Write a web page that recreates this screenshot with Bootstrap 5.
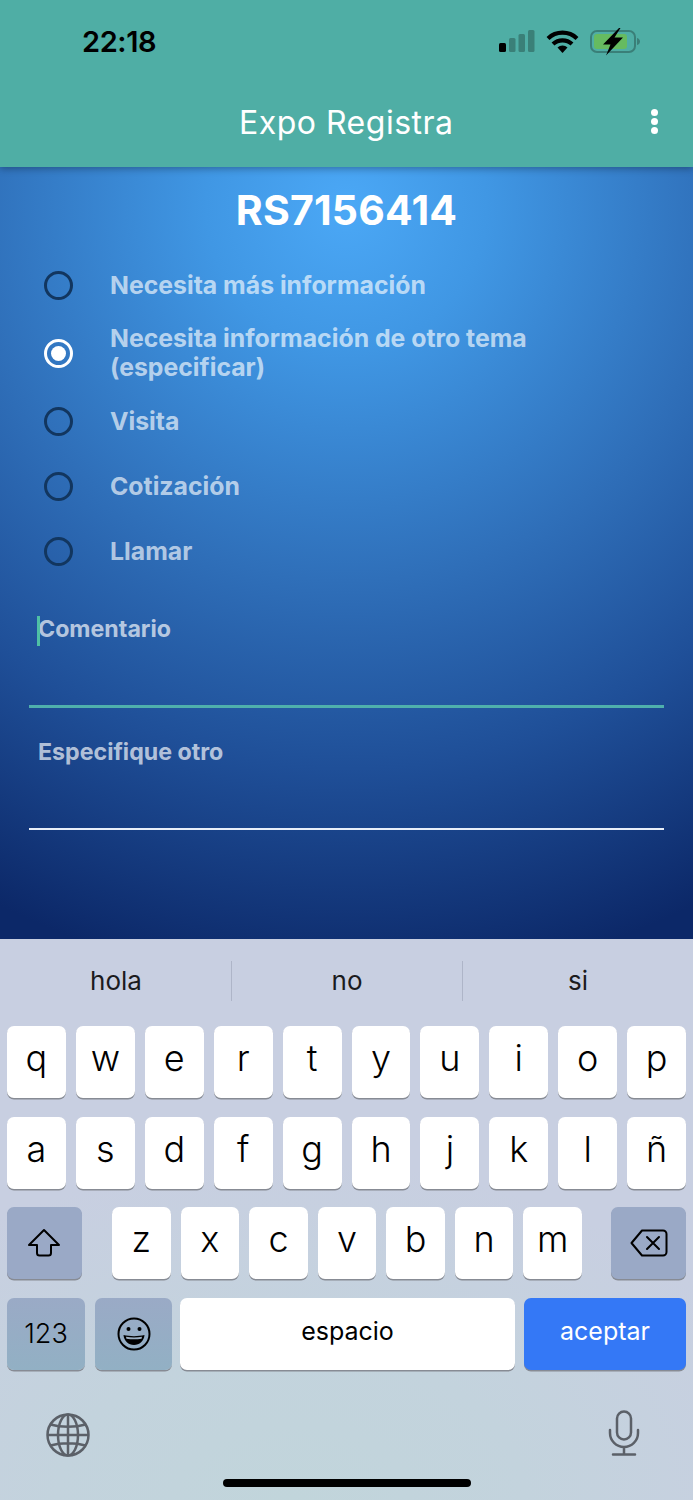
<!DOCTYPE html>
<html lang="en">
<head>
  <meta charset="UTF-8">
  <meta name="viewport" content="width=device-width, initial-scale=1">
  <link href="https://cdn.jsdelivr.net/npm/bootstrap@5.3.0/dist/css/bootstrap.min.css" rel="stylesheet">
  <title>Expo Registra</title>
  <style>
    body {
      width: 693px;
      height: 1500px;
      overflow: hidden;
      font-family: Inter, "Liberation Sans", sans-serif;
      background-color: #0c2868;
    }
    .app-head {
      height: 167px;
      background-color: #4faea5;
      box-shadow: 0 2px 7px rgba(0, 0, 0, .3);
      position: relative;
      z-index: 2;
    }
    .status-row { height: 83px; padding: 28px 48px 0 82px; }
    .status-time { font-size: 29px; font-weight: 600; color: #000; line-height: 28px; letter-spacing: -.4px; }
    .status-icons { margin-top: -1px; }
    .title-row { height: 84px; padding: 0 35px 5px 0; }
    .app-title { font-size: 32px; font-weight: 400; color: #fff; margin-left: 239px; letter-spacing: .5px; }
    .dots { width: 7px; display: flex; flex-direction: column; gap: 2px; margin-bottom: 2px; }
    .dots span { width: 7px; height: 7px; border-radius: 50%; background: #fff; }
    .form-pane {
      height: 772px;
      padding: 0 29px;
      background: radial-gradient(ellipse 780px 780px at 50% 40px, #4ba8f6 0%, #4097e4 18%, #2f6fb9 48%, #1f4f98 72%, #0c2868 100%);
    }
    .code-title { font-size: 41px; font-weight: 700; color: #fff; text-align: center; line-height: 46px; padding-top: 20px; height: 88px; letter-spacing: .2px; }
    .opt-row { padding-left: 15px; color: rgba(255, 255, 255, .65); font-size: 24.8px; font-weight: 650; line-height: 29px; }
    .opt-text { margin-left: 37px; }
    .radio-dot { flex: 0 0 29px; width: 29px; height: 29px; border-radius: 50%; border: 3px solid #12365f; }
    .radio-dot.on { border-color: #fff; position: relative; }
    .radio-dot.on::after { content: ""; position: absolute; inset: 4px; border-radius: 50%; background: #fff; }
    .field-label { color: rgba(255, 255, 255, .68); font-size: 23.2px; font-weight: 650; line-height: 30px; padding-left: 9px; position: relative; }
    .caret-bar { position: absolute; left: 8px; top: 2px; width: 3px; height: 30px; background: #4fc0a5; }
    .field-first { margin-top: 33px; margin-bottom: 61px; }
    .field-second { margin-top: 29px; margin-bottom: 61px; }
    .field-line { height: 3px; background: #4fb0ac; }
    .field-line.plain { height: 2px; background: #e8eef8; }
    .kb {
      height: 561px;
      background: radial-gradient(ellipse 520px 340px at 42% 100%, #c1d5db 0%, #c3d3dd 45%, #c8cfe1 100%);
    }
    .suggest { height: 87px; }
    .suggest > div { flex: 1; text-align: center; font-size: 26px; color: #1b1b1d; line-height: 84px; position: relative; padding-left: 1px; }
    .suggest > div + div::before { content: ""; position: absolute; left: 0; top: 22px; height: 40px; width: 1px; background: #aeb5c8; }
    .key-row { height: 72px; margin-bottom: 18.5px; padding: 0 7px; gap: 10px; }
    .kkey {
      background: #fff;
      border-radius: 7px;
      box-shadow: 0 1.5px 0 #878b94;
      color: #000;
      font-size: 36px;
      font-weight: 300;
      line-height: 65px;
      text-align: center;
      flex: 1;
    }
    .kkey.mod { background: #9aa9c6; display: flex; align-items: center; justify-content: center; }
    .kkey.mod.low { background: linear-gradient(#9aaac6, #92b0c4); }
    .kkey.w-shift { flex: 0 0 75px; margin-right: 20px; padding-right: 2px; }
    .kkey.w-back { flex: 0 0 75px; margin-left: 19px; }
    .kkey.w-num { flex: 0 0 78px; font-size: 27px; line-height: 71px; display: block; }
    .kkey.w-emoji { flex: 0 0 77px; margin-right: -2px; }
    .kkey.w-space { flex: 0 0 335px; font-size: 25px; line-height: 66px; font-weight: 400; }
    .kkey.w-go { flex: 0 0 162px; font-size: 25px; line-height: 66px; background: #3478f6; color: #fff; margin-left: -1px; font-weight: 400; }
    .kb-foot { height: 90px; padding: 0 53px 0 46px; }
    .globe-icon { margin-top: 3px; }
    .home-row { height: 8px; margin-top: .5px; }
    .home-bar { width: 248px; height: 8px; border-radius: 4px; background: #000; }
  </style>
</head>
<body>

<div class="app-head">
  <div class="status-row d-flex justify-content-between">
    <div class="status-time">22:18</div>
    <svg class="status-icons" width="150" height="30" viewBox="495 27 150 30">
      <rect x="499" y="43" width="7" height="9" rx="1.5" fill="#000"/>
      <rect x="509" y="38" width="6.5" height="14" rx="1.5" fill="#3a8078"/>
      <rect x="518.500" y="34" width="6.500" height="18" rx="1.5" fill="#3a8078"/>
      <rect x="528" y="30" width="6.500" height="22" rx="1.5" fill="#3a8078"/>
      <path d="M548 38.500a21 21 0 0 1 29 0M553 44a14 14 0 0 1 19 0" fill="none" stroke="#000" stroke-width="4.200"/>
      <path d="M557.500 47.500a7.500 7.500 0 0 1 10 0L562.500 53z" fill="#000"/>
      <rect x="591" y="31" width="44" height="21" rx="6" fill="none" stroke="#3a7f78" stroke-width="2"/>
      <rect x="594" y="34" width="33" height="15" rx="3" fill="#66bb60"/>
      <path d="M637 38c2 .5 3 2 3 3.500s-1 3-3 3.500z" fill="#3a7f78"/>
      <path d="M619 28l-16 16.500h7.500l-4.500 11 17-18h-8.500l6-9.500z" fill="#000"/>
    </svg>
  </div>
  <div class="title-row d-flex align-items-center justify-content-between">
    <div class="app-title">Expo Registra</div>
    <div class="dots"><span></span><span></span><span></span></div>
  </div>
</div>

<div class="form-pane">
  <div class="code-title">RS7156414</div>

  <div class="opt-row d-flex align-items-center" style="height:60px">
    <span class="radio-dot"></span><span class="opt-text">Necesita más información</span>
  </div>
  <div class="opt-row d-flex align-items-center" style="height:76px">
    <span class="radio-dot on"></span><span class="opt-text">Necesita información de otro tema<br>(especificar)</span>
  </div>
  <div class="opt-row d-flex align-items-center" style="height:60px">
    <span class="radio-dot"></span><span class="opt-text">Visita</span>
  </div>
  <div class="opt-row d-flex align-items-center" style="height:70px">
    <span class="radio-dot"></span><span class="opt-text">Cotización</span>
  </div>
  <div class="opt-row d-flex align-items-center" style="height:60px">
    <span class="radio-dot"></span><span class="opt-text">Llamar</span>
  </div>

  <div class="field-label field-first"><span class="caret-bar"></span>Comentario</div>
  <div class="field-line"></div>
  <div class="field-label field-second">Especifique otro</div>
  <div class="field-line plain"></div>
</div>

<div class="kb">
  <div class="suggest d-flex">
    <div>hola</div>
    <div>no</div>
    <div>si</div>
  </div>
  <div class="key-row d-flex">
    <div class="kkey">q</div><div class="kkey">w</div><div class="kkey">e</div><div class="kkey">r</div><div class="kkey">t</div><div class="kkey">y</div><div class="kkey">u</div><div class="kkey">i</div><div class="kkey">o</div><div class="kkey">p</div>
  </div>
  <div class="key-row d-flex">
    <div class="kkey">a</div><div class="kkey">s</div><div class="kkey">d</div><div class="kkey">f</div><div class="kkey">g</div><div class="kkey">h</div><div class="kkey">j</div><div class="kkey">k</div><div class="kkey">l</div><div class="kkey">ñ</div>
  </div>
  <div class="key-row d-flex">
    <div class="kkey mod w-shift">
      <svg width="34" height="30" viewBox="0 0 34 30"><path d="M17 2L2 17h8v8a2.500 2.500 0 0 0 2.500 2.500h9A2.500 2.500 0 0 0 24 25v-8h8z" fill="none" stroke="#000" stroke-width="2" stroke-linejoin="round"/></svg>
    </div>
    <div class="kkey">z</div><div class="kkey">x</div><div class="kkey">c</div><div class="kkey">v</div><div class="kkey">b</div><div class="kkey">n</div><div class="kkey">m</div>
    <div class="kkey mod w-back">
      <svg width="38" height="28" viewBox="0 0 38 28"><path d="M12 1.500h21a3.500 3.500 0 0 1 3.500 3.500v18a3.500 3.500 0 0 1-3.500 3.500H12L1.500 14z" fill="none" stroke="#000" stroke-width="2" stroke-linejoin="round"/><path d="M17 8l12 12M29 8L17 20" stroke="#000" stroke-width="2" stroke-linecap="round"/></svg>
    </div>
  </div>
  <div class="key-row d-flex">
    <div class="kkey mod low w-num">123</div>
    <div class="kkey mod low w-emoji">
      <svg width="34" height="34" viewBox="0 0 34 34"><circle cx="17" cy="17" r="15.500" fill="none" stroke="#000" stroke-width="2"/><circle cx="11.500" cy="12" r="2" fill="#000"/><circle cx="22.500" cy="12" r="2" fill="#000"/><path d="M6.500 18c6 1.500 15 1.500 21 0-.5 6-5 10-10.500 10S7 24 6.500 18z" fill="#000"/><path d="M9 19.700c5 1 11 1 16 0l-.4 2c-5 .8-10.200.8-15.200 0z" fill="#9db0c4"/></svg>
    </div>
    <div class="kkey w-space">espacio</div>
    <div class="kkey w-go">aceptar</div>
  </div>
  <div class="kb-foot d-flex justify-content-between align-items-center">
    <svg class="globe-icon" width="44" height="44" viewBox="0 0 44 44" fill="none" stroke="#5b6068" stroke-width="2.500"><circle cx="22" cy="22" r="20.500"/><ellipse cx="22" cy="22" rx="10" ry="20.500"/><path d="M22 1.500v41M1.500 22h41M4.500 11.500c10 3 25 3 35 0M4.500 32.500c10-3 25-3 35 0"/></svg>
    <svg width="32" height="46" viewBox="0 0 32 46" fill="none" stroke="#5b6068" stroke-width="2.500"><rect x="9" y="1.500" width="14" height="28" rx="7"/><path d="M2 20v3a14 14 0 0 0 28 0v-3M16 37v7M5 44.500h22" stroke-linecap="round"/></svg>
  </div>
  <div class="home-row d-flex justify-content-center"><div class="home-bar"></div></div>
</div>

<script src="https://cdn.jsdelivr.net/npm/bootstrap@5.3.0/dist/js/bootstrap.bundle.min.js"></script>
</body>
</html>
